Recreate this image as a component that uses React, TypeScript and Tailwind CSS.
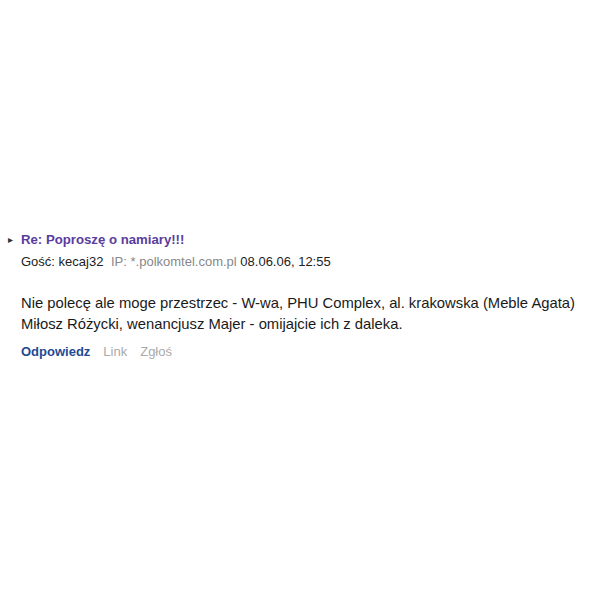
export default function App() {
  return (
    <div className="w-[600px] h-[600px] bg-white font-['Liberation_Sans',Arial,sans-serif] text-[#222]">
      <div className="pt-[232px] pl-[6px]">
        <div className="flex items-center h-[16px]">
          <span className="w-[15px] pl-[2px] text-[10px] text-[#333] leading-none">▸</span>
          <span className="text-[13.2px] leading-[16px] font-bold text-[#5a3c9e]">Re: Poproszę o namiary!!!</span>
        </div>
        <div className="pl-[15px] mt-[6px] text-[13px] leading-[16px] text-[#222]">
          Gość: kecaj32 <span className="ml-[4px] text-[#888]">IP: *.polkomtel.com.pl</span> 08.06.06, 12:55
        </div>
        <div className="pl-[15px] mt-[23px] text-[14.8px] leading-[21px] text-[#1a1a1a]">
          <p>Nie polecę ale moge przestrzec - W-wa, PHU Complex, al. krakowska (Meble Agata)</p>
          <p>Miłosz Różycki, wenancjusz Majer - omijajcie ich z daleka.</p>
        </div>
        <div className="pl-[15px] mt-[9px] flex gap-[13px] text-[13px] leading-[16px]">
          <span className="font-bold text-[#1e4a94]">Odpowiedz</span>
          <span className="text-[#aaa]">Link</span>
          <span className="text-[#aaa]">Zgłoś</span>
        </div>
      </div>
    </div>
  );
}
